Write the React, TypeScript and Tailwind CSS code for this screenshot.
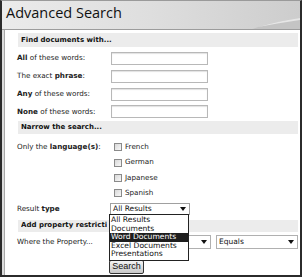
import React from "react";

const Band = ({ children, className = "" }: { children: React.ReactNode; className?: string }) => (
  <div className={`ml-[13px] mr-[2px] flex items-center bg-[#ececec] pl-[3px] font-bold text-[7px] text-[#111] ${className}`}>
    {children}
  </div>
);

const TextRow = ({ label }: { label: React.ReactNode }) => (
  <div className="flex h-[17.7px] items-center">
    <div className="w-[106px] shrink-0 whitespace-nowrap pl-[12px] text-[7.2px] text-[#222]">{label}</div>
    <div className="h-[13px] w-[97px] border border-[#b8b8b8] bg-white shadow-[inset_0_1px_1px_rgba(0,0,0,0.12)]" />
  </div>
);

const Check = ({ label, first }: { label: string; first?: boolean }) => (
  <div className="flex h-[15.3px] items-center">
    <div className="w-[109px] shrink-0 whitespace-nowrap pl-[12px] text-[7.2px] text-[#222]">
      {first ? (
        <>
          Only the <b>language(s)</b>:
        </>
      ) : null}
    </div>
    <div className="h-[8px] w-[8px] border border-[#8a8a8a] bg-gradient-to-br from-[#d8d8d8] to-[#f8f8f8]" />
    <span className="ml-[3px] text-[7.2px] text-[#222]">{label}</span>
  </div>
);

const Arrow = () => (
  <svg width="6" height="4" viewBox="0 0 6 4" className="shrink-0">
    <path d="M0 0 H6 L3 4 Z" fill="#111" />
  </svg>
);

export default function App() {
  return (
    <div className="h-[278px] w-[303px] bg-white" style={{ fontFamily: '"DejaVu Sans", Verdana, sans-serif' }}>
      <div className="relative flex h-[277px] w-[302px] flex-col border-b-2 border-l-2 border-r-2 border-t border-[#2b2b2b] border-t-[#9a9a9a]">
        {/* Header */}
        <div className="relative h-[29px] shrink-0 overflow-hidden border-b border-[#9c9c9c] bg-gradient-to-r from-[#ebebeb] via-[#dedede] to-[#cdcdcd]">
          <span
            className="absolute left-[4px] top-[5px] text-[14.5px] leading-none text-[#111]"
            style={{ fontFamily: '"Open Sans", "Liberation Sans", sans-serif' }}
          >
            Advanced Search
          </span>
          <svg className="absolute right-0 top-0" width="50" height="29" viewBox="0 0 50 29">
            <path d="M8 26 C22 22 36 19 50 17 L50 29 L0 29 Z" fill="#c4c4c4" />
            <path d="M8 26 C22 22 36 19 50 17 L50 19 C36 21 22 23.5 8 26 Z" fill="#e6e6e6" />
          </svg>
        </div>
        {/* Body */}
        <div className="flex flex-1 bg-[#dcdcdc] pl-[2px]">
          <div className="relative flex-1 border-l border-[#a8a8a8] bg-white pt-[3px]">
            <Band className="h-[14px]">Find documents with...</Band>
            <div className="mt-[3px]">
              <TextRow label={<><b>All</b> of these words:</>} />
              <TextRow label={<>The exact <b>phrase</b>:</>} />
              <TextRow label={<><b>Any</b> of these words:</>} />
              <TextRow label={<><b>None</b> of these words:</>} />
            </div>
            <Band className="h-[13px]">Narrow the search...</Band>
            <div className="mt-[6px]">
              <Check label="French" first />
              <Check label="German" />
              <Check label="Japanese" />
              <Check label="Spanish" />
            </div>
            <div className="mt-[2px] flex h-[12px] items-center">
              <div className="w-[105px] shrink-0 pl-[12px] text-[7.2px] text-[#222]">
                Result <b>type</b>
              </div>
              <div className="flex h-[12px] w-[80px] items-center justify-between border border-[#a0a0a0] bg-white pl-[2px] pr-[3px] text-[7.5px] text-[#111]">
                <span>All Results</span>
                <Arrow />
              </div>
            </div>
            <Band className="mt-[5px] h-[12px]">
              <span className="block w-[86px] overflow-hidden whitespace-nowrap leading-[9px]">Add property restrictions...</span>
            </Band>
            <div className="mt-[3px] flex h-[14px] items-center">
              <div className="w-[105px] shrink-0 whitespace-nowrap pl-[12px] text-[7.2px] text-[#222]">Where the Property...</div>
              <div className="flex h-[14px] w-[101px] items-center justify-end border border-[#b0b0b0] bg-white pr-[3px]">
                <Arrow />
              </div>
              <div className="ml-[5px] flex h-[14px] w-[82px] items-center justify-between border border-[#b0b0b0] bg-white pl-[2px] pr-[3px] text-[7.5px] text-[#111]">
                <span>Equals</span>
                <Arrow />
              </div>
            </div>
            <div className="mt-[11px] pl-[104px]">
              <div
                className="flex h-[14px] w-[35px] items-center justify-center rounded-[2px] border border-[#333] bg-gradient-to-b from-[#f4f4f4] to-[#c8c8c8] text-[9px] text-[#111]"
                style={{ fontFamily: '"Liberation Sans", Arial, sans-serif' }}
              >
                Search
              </div>
            </div>
            {/* Dropdown list */}
            <div className="absolute left-[104px] top-[184px] flex w-[80px] flex-col overflow-hidden border border-[#222] bg-white py-[1px] text-[7.6px] leading-[8.5px] text-[#111]">
              <div className="whitespace-nowrap pl-[1px]">All Results</div>
              <div className="whitespace-nowrap pl-[1px]">Documents</div>
              <div className="whitespace-nowrap bg-[#1e1e1e] pl-[1px] text-white">Word Documents</div>
              <div className="whitespace-nowrap pl-[1px]">Excel Documents</div>
              <div className="whitespace-nowrap pl-[1px]">Presentations</div>
            </div>
          </div>
        </div>
      </div>
    </div>
  );
}
